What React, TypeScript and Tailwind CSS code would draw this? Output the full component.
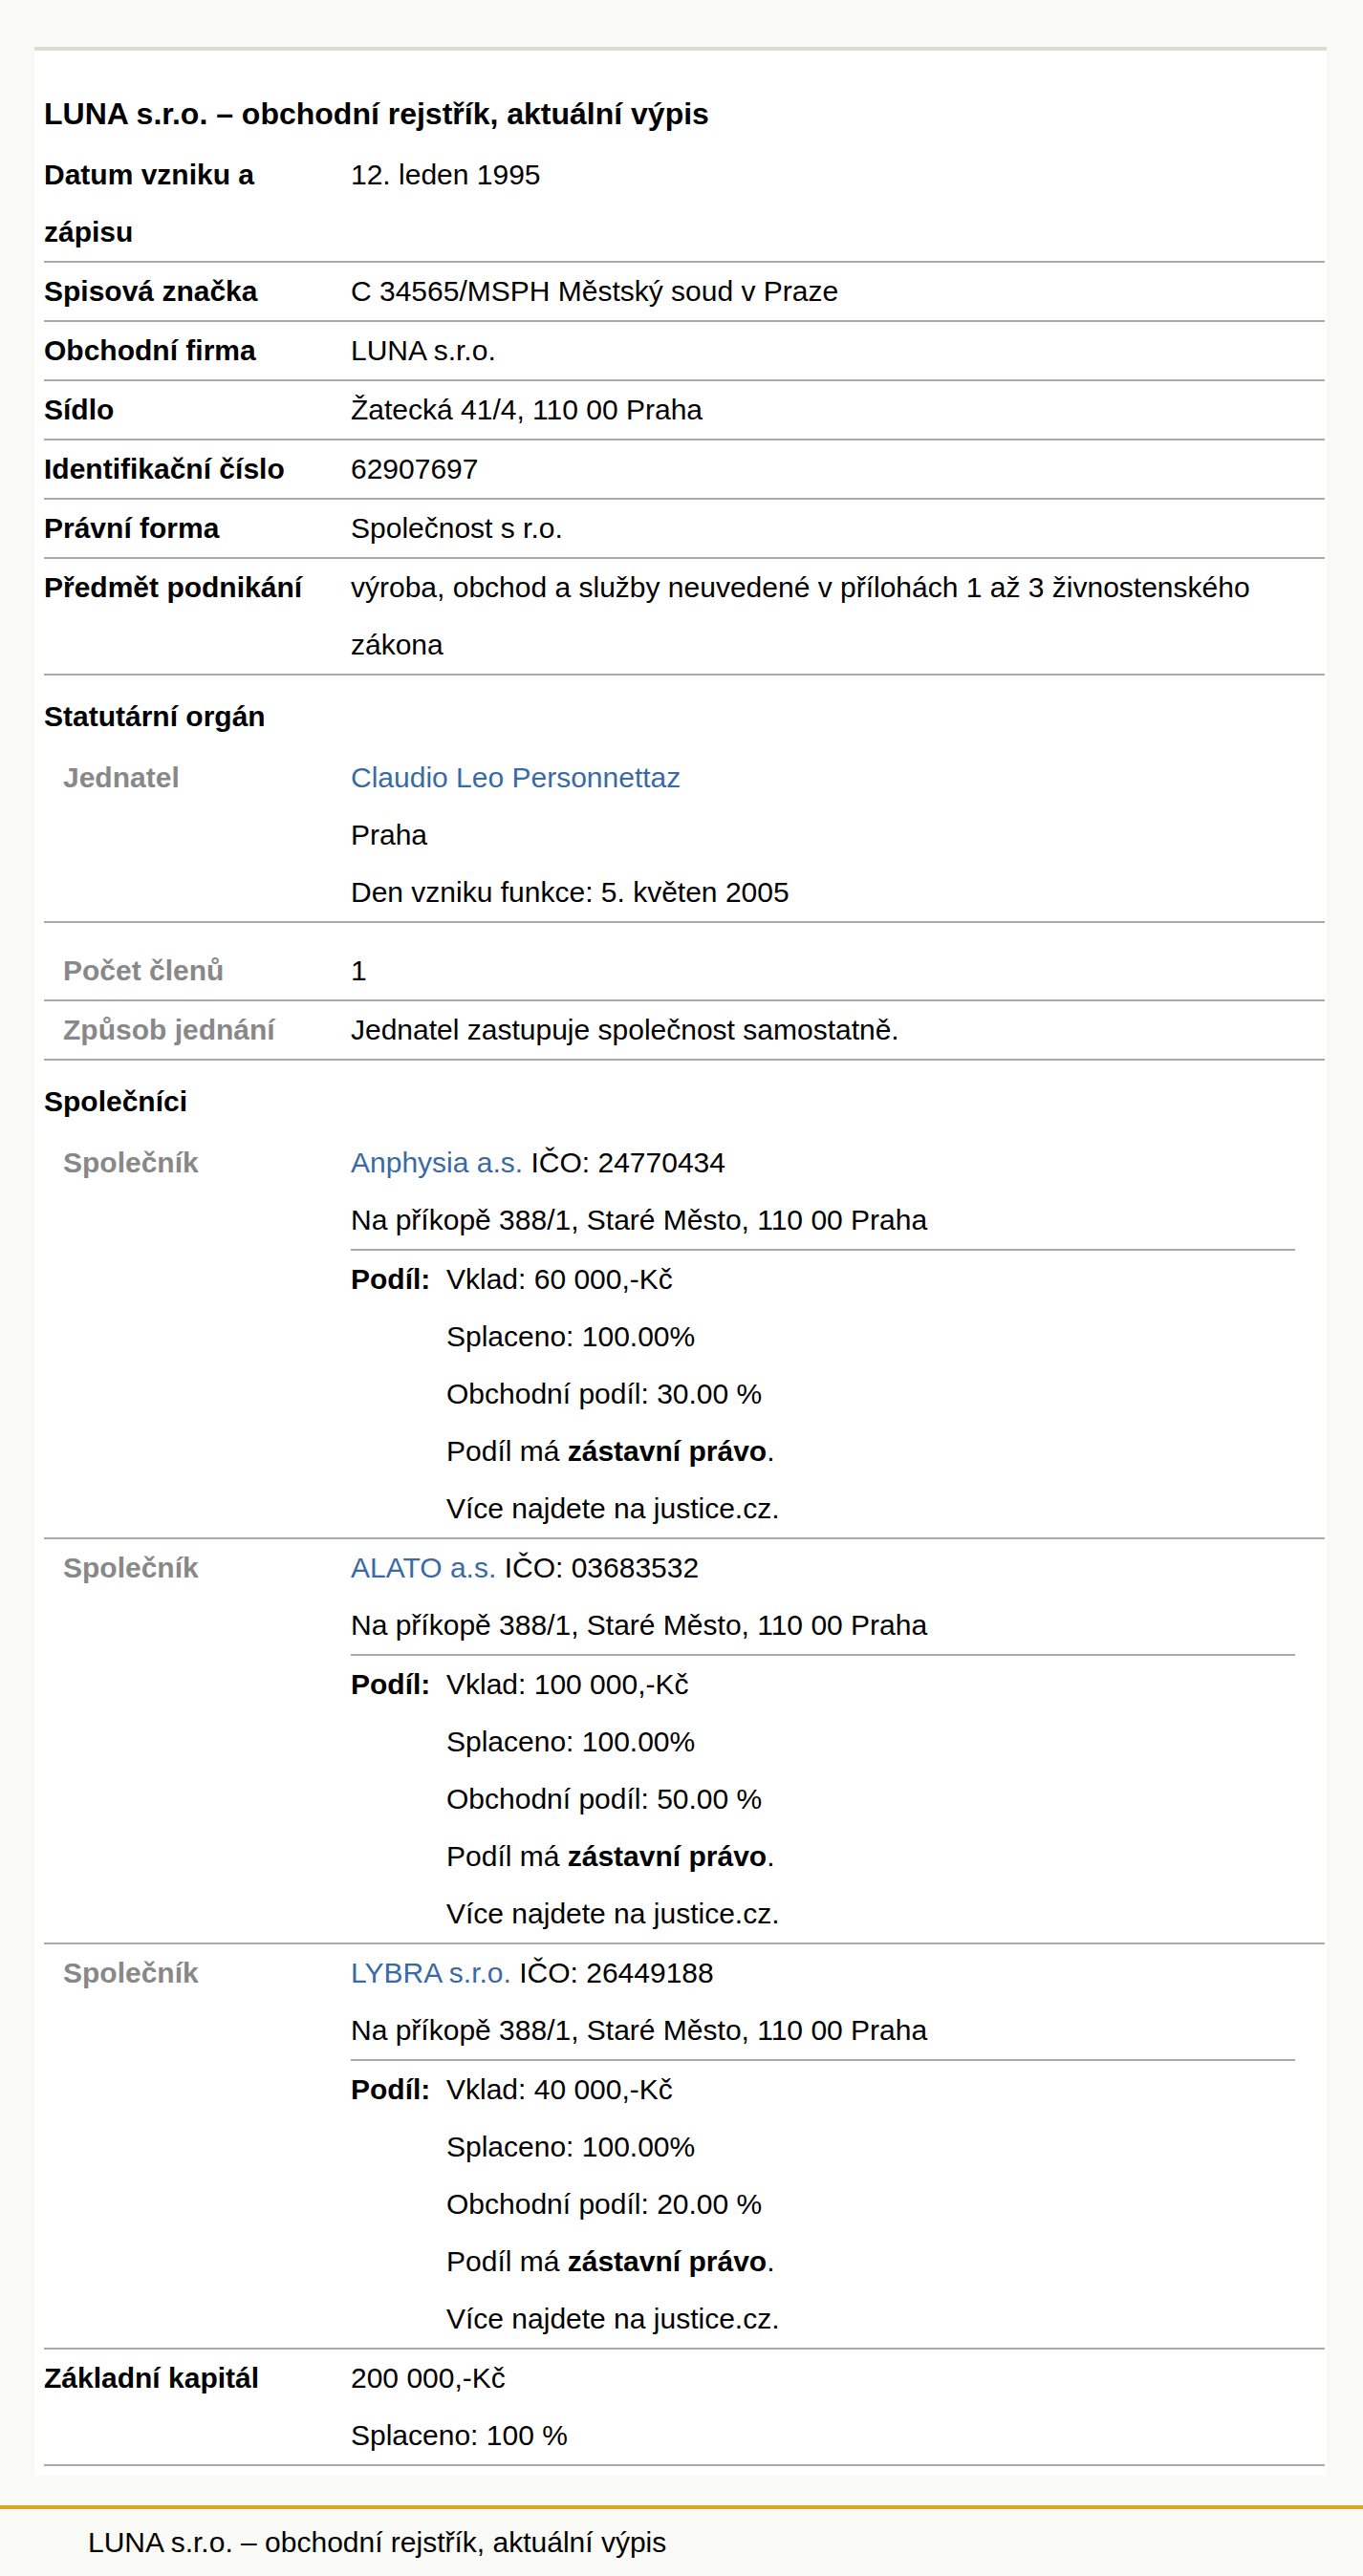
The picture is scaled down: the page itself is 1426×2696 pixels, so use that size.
import React from 'react';

const sep = 'border-b-2 border-[#aaaaaa]';

function Row({ label, children, sub = false, className = '' }: { label: string; children: React.ReactNode; sub?: boolean; className?: string }) {
  return (
    <div className={`flex ${sep} ${className}`}>
      <div className={`w-[321px] shrink-0 pr-[12px] font-bold ${sub ? 'pl-[20px] text-[#888888]' : ''}`}>{label}</div>
      <div className="flex-1 min-w-0">{children}</div>
    </div>
  );
}

function Link({ children }: { children: React.ReactNode }) {
  return <a className="text-[#3a6aa5]">{children}</a>;
}

type Partner = { name: string; ico: string; vklad: string; podil: string };

const partners: Partner[] = [
  { name: 'Anphysia a.s.', ico: '24770434', vklad: '60 000,-Kč', podil: '30.00 %' },
  { name: 'ALATO a.s.', ico: '03683532', vklad: '100 000,-Kč', podil: '50.00 %' },
  { name: 'LYBRA s.r.o.', ico: '26449188', vklad: '40 000,-Kč', podil: '20.00 %' },
];

export default function App() {
  return (
    <div className="min-h-screen bg-[#f9f9f5] pt-[49px] font-['Liberation_Sans',Arial,sans-serif] text-[30px] leading-[60px] text-black">
      <main className="ml-[36px] mr-[38px] bg-white border-t-4 border-[#dcdcd2] pt-[36px] pb-[10px] pl-[10px] pr-[2px]">
        <h1 className="text-[32px] font-bold leading-[60px]">LUNA s.r.o. – obchodní rejstřík, aktuální výpis</h1>

        <div className="mt-[4px]">
          <Row label="Datum vzniku a zápisu">12. leden 1995</Row>
          <Row label="Spisová značka">C 34565/MSPH Městský soud v Praze</Row>
          <Row label="Obchodní firma">LUNA s.r.o.</Row>
          <Row label="Sídlo">Žatecká 41/4, 110 00 Praha</Row>
          <Row label="Identifikační číslo">62907697</Row>
          <Row label="Právní forma">Společnost s r.o.</Row>
          <Row label="Předmět podnikání">výroba, obchod a služby neuvedené v přílohách 1 až 3 živnostenského zákona</Row>

          <h2 className="pt-[13px] font-bold">Statutární orgán</h2>
          <Row label="Jednatel" sub className="mt-[4px]">
            <div><Link>Claudio Leo Personnettaz</Link></div>
            <div>Praha</div>
            <div>Den vzniku funkce: 5. květen 2005</div>
          </Row>
          <Row label="Počet členů" sub className="pt-[20px]">1</Row>
          <Row label="Způsob jednání" sub>Jednatel zastupuje společnost samostatně.</Row>

          <h2 className="pt-[13px] font-bold">Společníci</h2>
          {partners.map((p, i) => (
            <Row key={p.ico} label="Společník" sub className={i === 0 ? 'mt-[4px]' : ''}>
              <div><Link>{p.name}</Link> IČO: {p.ico}</div>
              <div>Na příkopě 388/1, Staré Město, 110 00 Praha</div>
              <div className={`mr-[31px] ${sep}`} />
              <div className="flex">
                <div className="w-[100px] shrink-0 font-bold">Podíl:</div>
                <div>
                  <div>Vklad: {p.vklad}</div>
                  <div>Splaceno: 100.00%</div>
                  <div>Obchodní podíl: {p.podil}</div>
                  <div>Podíl má <b>zástavní právo</b>.</div>
                  <div>Více najdete na justice.cz.</div>
                </div>
              </div>
            </Row>
          ))}
          <Row label="Základní kapitál">
            <div>200 000,-Kč</div>
            <div>Splaceno: 100 %</div>
          </Row>
        </div>
      </main>

      <footer className="mt-[31px] border-t-4 border-[#daa520] pt-[5px] pl-[92px] pb-[4px]">
        LUNA s.r.o. – obchodní rejstřík, aktuální výpis
      </footer>
    </div>
  );
}
